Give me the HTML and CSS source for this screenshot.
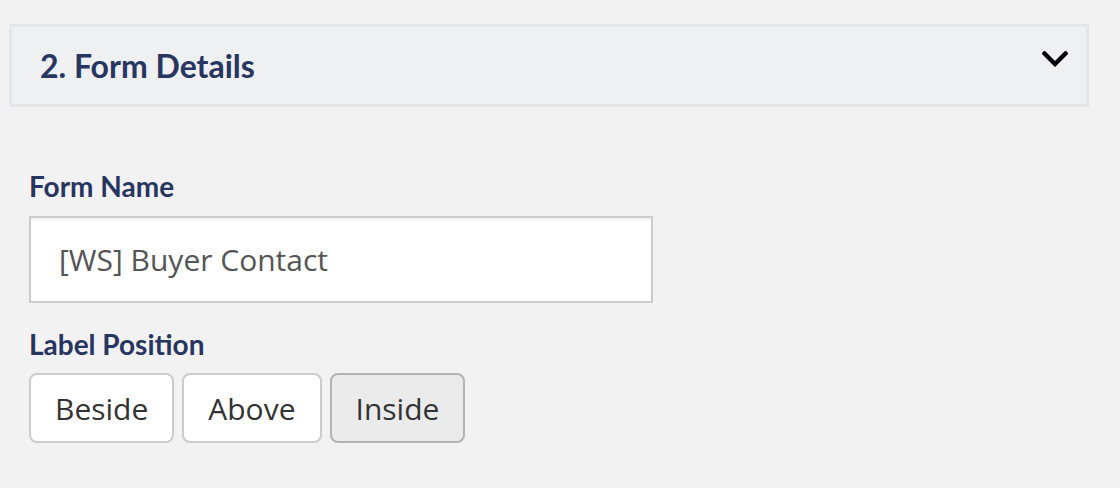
FILE: index.html
```html
<!DOCTYPE html>
<html lang="en">
<head>
<meta charset="utf-8">
<title>Form Details</title>
<link rel="stylesheet" href="styles.css">
</head>
<body>
  <div class="page">
    <div class="section-header">
      <h2 class="section-title">2. Form Details</h2>
      <svg class="chevron" width="26" height="16" viewBox="0 0 26 16" aria-hidden="true">
        <path d="M2.5 2.5 L13 13 L23.5 2.5" fill="none" stroke="#000" stroke-width="4.4" stroke-linecap="square" stroke-linejoin="miter"/>
      </svg>
    </div>
    <div class="section-body">
      <label class="field-label" for="form-name">Form Name</label>
      <input id="form-name" class="text-input" type="text" value="[WS] Buyer Contact">
      <div class="field-label label-gap">Label Position</div>
      <div class="btn-group">
        <button class="seg-btn" type="button">Beside</button>
        <button class="seg-btn" type="button">Above</button>
        <button class="seg-btn active" type="button">Inside</button>
      </div>
    </div>
  </div>
</body>
</html>
```
FILE: styles.css
```css
html, body {
  margin: 0;
  padding: 0;
  background: #f2f2f2;
}

.page {
  padding: 24px 31px 0 9px;
}

.section-header {
  display: flex;
  align-items: center;
  justify-content: space-between;
  height: 83px;
  box-sizing: border-box;
  border: 3px solid #e5e6e9;
  background: #eff0f2;
  padding: 0 18px 0 28px;
}

.section-title {
  margin: 0;
  font-family: Lato, "Liberation Sans", sans-serif;
  font-weight: 700;
  font-size: 32px;
  line-height: 40px;
  color: #273561;
}

.chevron {
  display: block;
  margin-bottom: 14px;
}

.section-body {
  padding: 62px 0 0 20px;
  display: flex;
  flex-direction: column;
  align-items: flex-start;
}

.field-label {
  display: block;
  font-family: Lato, "Liberation Sans", sans-serif;
  font-weight: 700;
  font-size: 28px;
  line-height: 34px;
  color: #273561;
  margin-bottom: 13px;
}

.label-gap {
  margin-top: 24px;
  margin-bottom: 12px;
}

.text-input {
  box-sizing: border-box;
  width: 624px;
  height: 87px;
  margin: 0;
  padding: 0 28px;
  border: 2px solid #cccccc;
  border-radius: 0;
  background: #ffffff;
  box-shadow: inset 0 2px 2px rgba(0, 0, 0, 0.06);
  font-family: "Open Sans", "Liberation Sans", sans-serif;
  font-size: 30px;
  color: #555555;
  outline: none;
}

.btn-group {
  display: flex;
  gap: 8px;
}

.seg-btn {
  box-sizing: border-box;
  height: 70px;
  margin: 0;
  padding: 0 24px;
  border: 2px solid #cccccc;
  border-radius: 8px;
  background: #ffffff;
  font-family: "Open Sans", "Liberation Sans", sans-serif;
  font-size: 30px;
  color: #333333;
  cursor: pointer;
}

.seg-btn.active {
  background: #ebebeb;
  border-color: #b3b3b3;
}
```
